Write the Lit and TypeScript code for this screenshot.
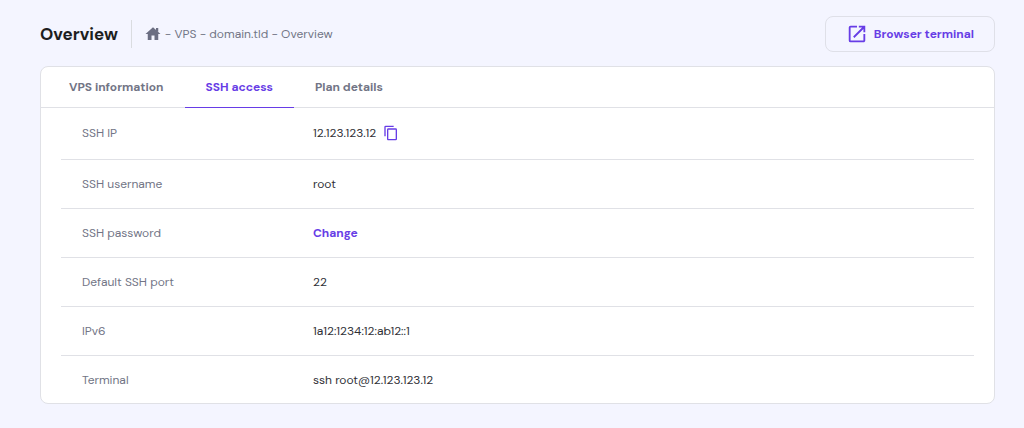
import { LitElement, html, css, nothing } from "lit";
import { customElement, property, state } from "lit/decorators.js";

interface Detail {
  label: string;
  value: string;
  kind?: "copy" | "action";
}

const TABS = ["VPS information", "SSH access", "Plan details"];

const DETAILS: Detail[] = [
  { label: "SSH IP", value: "12.123.123.12", kind: "copy" },
  { label: "SSH username", value: "root" },
  { label: "SSH password", value: "Change", kind: "action" },
  { label: "Default SSH port", value: "22" },
  { label: "IPv6", value: "1a12:1234:12:ab12::1" },
  { label: "Terminal", value: "ssh root@12.123.123.12" },
];

@customElement("page-header")
class PageHeader extends LitElement {
  static styles = css`
    :host {
      display: flex;
      align-items: center;
      justify-content: space-between;
      gap: 24px;
    }
    .lead {
      display: flex;
      align-items: center;
    }
    h1 {
      margin: 0;
      padding-right: 13px;
      border-right: 1px solid #dadce0;
      font-size: 17px;
      line-height: 28px;
      font-weight: 700;
      color: #1d1e20;
    }
    .crumbs {
      display: flex;
      align-items: center;
      gap: 3px;
      margin-left: 12px;
      font-size: 12px;
      line-height: 20px;
      color: #727586;
    }
    .home {
      display: flex;
      color: #6b6e82;
    }
    .terminal {
      display: flex;
      align-items: center;
      gap: 6px;
      padding: 6px 20px;
      border: 1px solid #dfe0e8;
      border-radius: 8px;
      background: transparent;
      color: #673de6;
      font: 700 12px/20px var(--ui-font);
    }
  `;

  render() {
    return html`
      <div class="lead">
        <h1>Overview</h1>
        <nav class="crumbs" aria-label="Breadcrumb">
          <a class="home" href="#" aria-label="Home">
            <svg width="18" height="18" viewBox="0 0 24 24" fill="currentColor" aria-hidden="true">
              <path d="M10 20v-6h4v6h5v-8h3L12 3 2 12h3v8z" />
              <path d="M16 4h3v5h-3z" />
            </svg>
          </a>
          <span>- VPS - domain.tld - Overview</span>
        </nav>
      </div>
      <button class="terminal" type="button">
        <svg width="22" height="22" viewBox="0 0 24 24" fill="currentColor" aria-hidden="true">
          <path
            d="M19 19H5V5h7V3H5a2 2 0 0 0-2 2v14a2 2 0 0 0 2 2h14c1.1 0 2-.9 2-2v-7h-2v7zM14 3v2h3.59l-9.83 9.83 1.41 1.41L19 6.41V10h2V3h-7z"
          />
        </svg>
        Browser terminal
      </button>
    `;
  }
}

@customElement("tab-bar")
class TabBar extends LitElement {
  @property({ attribute: false }) tabs: string[] = [];
  @property() selected = "";

  static styles = css`
    :host {
      display: flex;
      padding-left: 7px;
      border-bottom: 1px solid #e0e1e6;
    }
    .tab {
      margin: 0 0 -1px;
      padding: 10px 21px;
      border: 0;
      border-bottom: 1px solid transparent;
      background: none;
      color: #727586;
      font: 700 12px/20px var(--ui-font);
    }
    .tab.active {
      border-bottom-color: #673de6;
      color: #673de6;
    }
  `;

  private select(tab: string) {
    this.dispatchEvent(new CustomEvent("tab-change", { detail: tab }));
  }

  render() {
    return this.tabs.map(
      (tab) => html`<button
        type="button"
        role="tab"
        aria-selected=${tab === this.selected}
        class=${tab === this.selected ? "tab active" : "tab"}
        @click=${() => this.select(tab)}
      >${tab}</button>`
    );
  }
}

@customElement("detail-table")
class DetailTable extends LitElement {
  @property({ attribute: false }) rows: Detail[] = [];

  static styles = css`
    :host {
      display: block;
      padding: 0 20px;
    }
    table {
      width: 100%;
      border-spacing: 0;
      font-size: 12px;
      line-height: 20px;
    }
    th,
    td {
      padding: 14px 0;
      border-bottom: 1px solid #e0e1e6;
      text-align: left;
      font-weight: 400;
    }
    tr:first-child > * {
      padding: 15px 0 16px;
    }
    tr:last-child > * {
      padding-bottom: 13px;
      border-bottom: 0;
    }
    th,
    tr:first-child > th {
      box-sizing: border-box;
      width: 252px;
      padding-left: 21px;
      color: #727586;
    }
    td {
      color: #2f3036;
    }
    .value {
      display: flex;
      align-items: center;
      gap: 7px;
    }
    button {
      display: flex;
      padding: 0;
      border: 0;
      background: none;
      color: #673de6;
      font: 700 12px/20px var(--ui-font);
    }
  `;

  private renderValue(row: Detail) {
    if (row.kind === "action") return html`<button type="button">${row.value}</button>`;
    return html`${row.value}${row.kind === "copy"
      ? html`<button type="button" aria-label="Copy ${row.label}">
          <svg width="16" height="16" viewBox="0 0 24 24" fill="currentColor" aria-hidden="true">
            <path
              d="M16 1H4a2 2 0 0 0-2 2v14h2V3h12V1zm3 4H8a2 2 0 0 0-2 2v14c0 1.1.9 2 2 2h11a2 2 0 0 0 2-2V7a2 2 0 0 0-2-2zm0 16H8V7h11v14z"
            />
          </svg>
        </button>`
      : nothing}`;
  }

  render() {
    return html`<table>
      <tbody>
        ${this.rows.map(
          (row) => html`<tr>
            <th scope="row">${row.label}</th>
            <td><div class="value">${this.renderValue(row)}</div></td>
          </tr>`
        )}
      </tbody>
    </table>`;
  }
}

@customElement("app-root")
class AppRoot extends LitElement {
  @state() private selected = "SSH access";

  static styles = css`
    :host {
      --ui-font: "DM Sans", Inter, "Open Sans", sans-serif;
      display: block;
      box-sizing: border-box;
      min-height: 100vh;
      padding: 16px 29px 23px 40px;
      background: #f4f5ff;
      font-family: var(--ui-font);
    }
    .card {
      margin-top: 14px;
      border: 1px solid #e0e1e6;
      border-radius: 8px;
      background: #fff;
    }
  `;

  render() {
    return html`
      <page-header></page-header>
      <main class="card">
        <tab-bar
          role="tablist"
          .tabs=${TABS}
          .selected=${this.selected}
          @tab-change=${(e: CustomEvent<string>) => (this.selected = e.detail)}
        ></tab-bar>
        <detail-table .rows=${DETAILS}></detail-table>
      </main>
    `;
  }
}
